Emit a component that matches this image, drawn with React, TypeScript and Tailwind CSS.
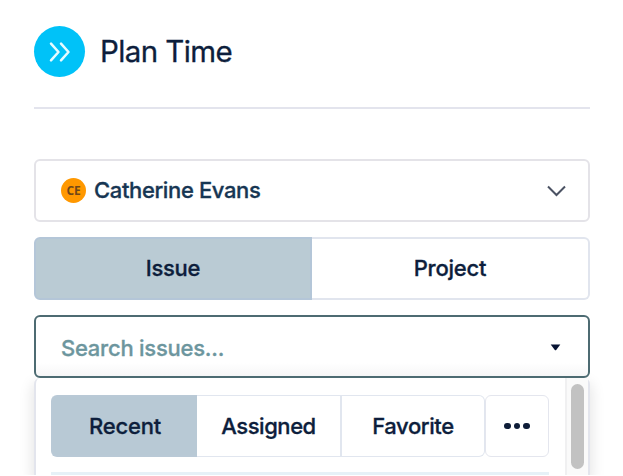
import { ReactNode } from 'react';

function Label({ children, className = 'tracking-[-0.2px]' }: { children: ReactNode; className?: string }) {
  return <span className={`block whitespace-nowrap text-[22px] leading-7 font-medium [-webkit-text-stroke:0.3px_currentColor] ${className}`}>{children}</span>;
}

function Header() {
  return (
    <header className="flex h-[109px] items-start border-b-2 border-[#e3e4ed] pt-[26px]">
      <div className="flex size-[51px] shrink-0 items-center justify-center rounded-full bg-[#00c2f8]">
        <svg width="24" height="22" viewBox="0 0 24 22" fill="none" stroke="#e6fbff" strokeWidth="2.5" strokeLinecap="round" strokeLinejoin="round">
          <path d="M3 2.7l7.5 8.3L3 19.3M13 2.7l7.5 8.3-7.5 8.3" />
        </svg>
      </div>
      <h1 className="ml-[15px] mt-[5px] whitespace-nowrap text-[29.5px] leading-10 font-normal tracking-[-0.6px] [-webkit-text-stroke:0.3px_#0d1e3c]">Plan Time</h1>
    </header>
  );
}

function UserSelect() {
  return (
    <div className="mt-[50px] flex h-[63px] items-center rounded-md border-2 border-[#e4e3e8] pl-[25px] pr-[22px]">
      <span className="flex size-[25px] items-center justify-center rounded-full bg-[#ff9800] font-['Open_Sans',sans-serif] text-[12px] font-bold tracking-[-0.3px] text-[#704719]">CE</span>
      <Label className="mb-0.5 ml-2 tracking-[-0.37px] text-[#173653]">Catherine Evans</Label>
      <svg className="ml-auto" width="20" height="14" viewBox="0 0 20 14" fill="none" stroke="#4b5263" strokeWidth="2">
        <path d="M2 2.5l8.5 8.5L19 2.5" />
      </svg>
    </div>
  );
}

function IssuePicker() {
  return (
    <section className="mt-[15px]">
      <div className="relative z-10 flex h-[63px] items-center rounded-md border-2 border-[#4d6b72] bg-linear-to-b from-white from-78% to-[#f6f6f7] pl-[25px] pr-[27px]">
        <Label className="mt-0.5 tracking-[-0.24px] text-[#6d969e]">Search issues...</Label>
        <svg className="ml-auto mt-0.5" width="11" height="7" viewBox="0 0 11 7" fill="#071333">
          <path d="M.7.5h9.6L6.2 6q-.7.7-1.4 0z" />
        </svg>
      </div>
      <div className="flex h-[97px] justify-between rounded-t-md border-x-2 border-[#e3e5ed] bg-white shadow-[0_6px_14px_2px_rgba(0,0,0,0.1)]">
        <div className="ml-[15px] w-[498px] pt-[17px]">
          <div className="flex h-[62px]">
            <div className="flex w-[434px]">
              <button className="w-[146px] rounded-l-md border-y-2 border-l-2 border-[#b9c9d6] bg-[#b8c9d5]"><Label>Recent</Label></button>
              <button className="w-[145px] border-y-[1.5px] border-r-2 border-[#e1e6ef]"><Label className="tracking-[-0.45px]">Assigned</Label></button>
              <button className="flex-1 rounded-r-md border-y-[1.5px] border-r-[1.5px] border-[#e1e6ef]"><Label className="tracking-[-0.4px]">Favorite</Label></button>
            </div>
            <button aria-label="More filters" className="flex flex-1 items-center justify-center gap-[3px] rounded-md border-[1.5px] border-[#e4e6ee]">
              <i className="size-[6.5px] rounded-full bg-[#0e1d38]" />
              <i className="size-[6.5px] rounded-full bg-[#0e1d38]" />
              <i className="size-[6.5px] rounded-full bg-[#0e1d38]" />
            </button>
          </div>
          <div className="mt-[15px] h-[3px] bg-[#e6f1f7]" />
        </div>
        <div className="flex w-[23px] justify-center border-l-2 border-[#f0f0f1] bg-[#fafafa] pt-1.5">
          <div className="h-[85px] w-[13px] rounded-full bg-[#c2c2c2]" />
        </div>
      </div>
    </section>
  );
}

export default function App() {
  return (
    <main className="h-[476px] w-[623px] overflow-hidden bg-white font-['Inter','Liberation_Sans',sans-serif] text-[#0d1e3c]">
      <div className="h-[475px] overflow-hidden pl-[34px] pr-[33px]">
        <Header />
        <UserSelect />
        <div className="mt-[15px] flex h-[63px]">
          <button className="w-[278px] rounded-l-md border-2 border-[#b4c6d8] bg-[#bacbd4] pb-px"><Label className="tracking-[-0.3px]">Issue</Label></button>
          <button className="flex-1 rounded-r-md border-y-2 border-r-2 border-[#e1e5ee] pb-px"><Label>Project</Label></button>
        </div>
        <IssuePicker />
      </div>
    </main>
  );
}
